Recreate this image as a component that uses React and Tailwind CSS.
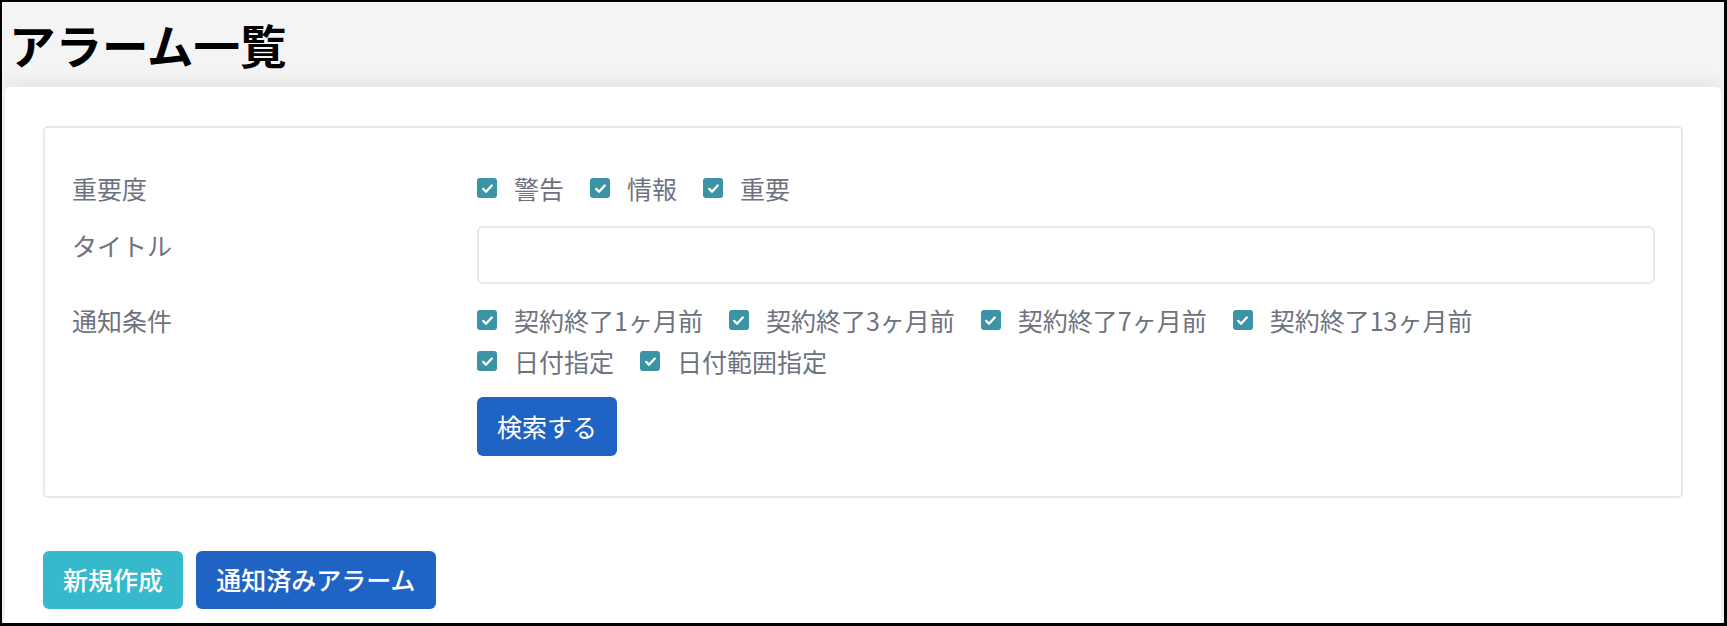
const font = { fontFamily: '"Noto Sans CJK JP", "Noto Sans", sans-serif' }

function Check({ label }) {
  return (
    <label className="flex items-center gap-[17px] mr-[26px] h-[36px]">
      <span className="w-[20px] h-[20px] rounded-[3px] bg-[#3b94a5] flex items-center justify-center">
        <svg width="15" height="15" viewBox="0 0 14 14" fill="none">
          <path d="M3 7.4l2.6 2.6L11 4.2" stroke="white" strokeWidth="2.2" strokeLinecap="round" strokeLinejoin="round" />
        </svg>
      </span>
      <span className="text-[25px] leading-[36px] text-[#6e727f]">{label}</span>
    </label>
  )
}

export default function App() {
  const levels = ['警告', '情報', '重要']
  const conds = ['契約終了1ヶ月前', '契約終了3ヶ月前', '契約終了7ヶ月前', '契約終了13ヶ月前', '日付指定', '日付範囲指定']

  return (
    <div style={font} className="w-[1727px] h-[626px] border-2 border-r-[3px] border-b-[3px] border-black bg-[#f4f4f4] flex flex-col overflow-hidden">
      <div className="h-[85px] shrink-0 flex items-center pl-[7px]">
        <h1 className="text-[46.5px] leading-none font-bold text-black">アラーム一覧</h1>
      </div>
      <div className="flex-1 mx-[3px] bg-white rounded-t-[5px] shadow-[0_-8px_14px_rgba(0,0,0,0.05)] px-[38px] pt-[39px]">
        <div className="border-2 border-[#e6e9f2] rounded-[5px] pt-[42px] pb-[40px] pl-[27px] pr-[26px]">
          <div className="flex">
            <div className="w-[405px] shrink-0 text-[25px] leading-[36px] text-[#6e727f]">重要度</div>
            <div className="flex">
              {levels.map(l => <Check key={l} label={l} />)}
            </div>
          </div>
          <div className="flex mt-[20px]">
            <div className="w-[405px] shrink-0 text-[25px] leading-[36px] pt-[1px] text-[#6e727f]">タイトル</div>
            <input className="flex-1 h-[58px] border-2 border-[#e6e9f2] rounded-[6px] px-3 outline-none" />
          </div>
          <div className="flex mt-[18px]">
            <div className="w-[405px] shrink-0 text-[25px] leading-[36px] text-[#6e727f]">通知条件</div>
            <div className="flex-1">
              <div className="flex flex-wrap max-w-[1080px] gap-y-[5px]">
                {conds.map(c => <Check key={c} label={c} />)}
              </div>
              <button className="mt-[18px] h-[59px] w-[140px] rounded-[6px] bg-[#1f63c4] text-white text-[25px]">検索する</button>
            </div>
          </div>
        </div>
        <div className="flex gap-[13px] mt-[53px]">
          <button className="h-[58px] w-[140px] rounded-[6px] bg-[#36b9cc] text-white text-[25px] font-medium">新規作成</button>
          <button className="h-[58px] w-[240px] rounded-[6px] bg-[#1f63c4] text-white text-[25px] font-medium">通知済みアラーム</button>
        </div>
      </div>
    </div>
  )
}
